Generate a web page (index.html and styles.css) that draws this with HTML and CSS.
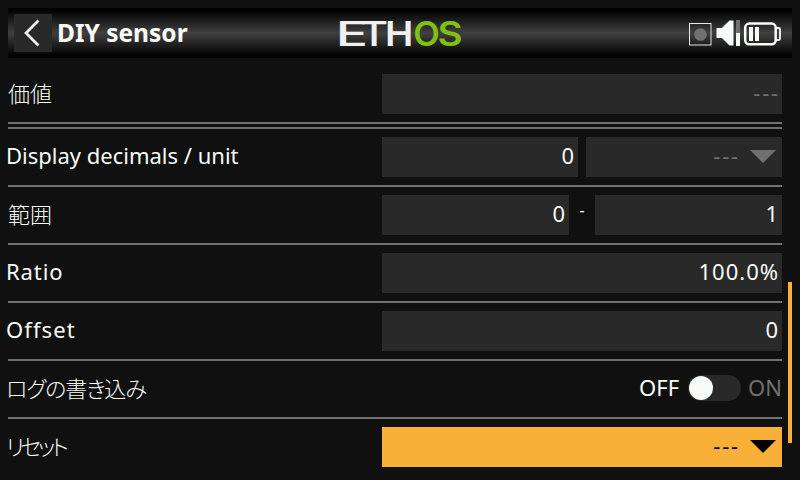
FILE: index.html
```html
<!DOCTYPE html>
<html lang="ja">
<head>
<meta charset="utf-8">
<title>DIY sensor</title>
<link rel="stylesheet" href="styles.css">
</head>
<body>
<header class="topbar">
  <button class="back" aria-label="Back"><svg width="38" height="38" viewBox="0 0 38 38"><path d="M24.5 6.5 L12 19 L24.5 31.5" fill="none" stroke="#f8fcf8" stroke-width="2.7"/></svg></button>
  <h1 class="title">DIY sensor</h1>
  <svg class="logo" width="140" height="50" viewBox="0 0 140 50">
    <g class="logo-light">
      <text transform="translate(4.8 37.8) scale(1.55 1)">E</text>
      <text transform="translate(29 37.8) scale(1.25 1)">T</text>
      <text class="heavy" transform="translate(53.9 37.8) scale(1.1 1)">H</text>
    </g>
    <g class="logo-green heavy">
      <text transform="translate(82.3 37.7) scale(1 1)">O</text>
      <text transform="translate(106.6 37.7) scale(1.12 1)">S</text>
    </g>
  </svg>
  <svg class="status" width="94" height="50" viewBox="0 0 94 50">
    <rect x="1.5" y="15.5" width="21.5" height="21.5" fill="none" stroke="#e4e8e4" stroke-width="1"/>
    <circle cx="12.5" cy="26.5" r="6.3" fill="#707070"/>
    <path d="M28.5 20 H34 L41.5 12.5 H45.5 V37.5 H41.5 L34 30 H28.5 Z" fill="#f8fcf8"/>
    <path d="M34 19.8 L39.5 14.3" stroke="#aaa" stroke-width="1"/>
    <rect x="48" y="12" width="4" height="13" fill="#707070"/>
    <rect x="48" y="25" width="4" height="13" fill="#f8fcf8"/>
    <rect x="57.2" y="15.6" width="30.5" height="20.6" rx="4" fill="none" stroke="#f8fcf8" stroke-width="2.5"/>
    <path d="M88 20 H90.5 Q92 20 92 21.5 V30.5 Q92 32 90.5 32 H88" fill="none" stroke="#f8fcf8" stroke-width="1.8"/>
    <rect x="61" y="19" width="4" height="14" fill="#f8fcf8"/>
    <rect x="67" y="19" width="4" height="14" fill="#f8fcf8"/>
  </svg>
</header>
<main class="form">
  <div class="row first"><span class="label cjk">価値</span><div class="controls"><div class="field muted dashes">---</div></div></div>
  <div class="row"><span class="label">Display decimals / unit</span><div class="controls split"><div class="field">0</div><div class="field select muted"><span class="dashes">---</span><svg class="arrow" width="26" height="13" viewBox="0 0 26 13"><path d="M0 0H26L13 13Z"/></svg></div></div></div>
  <div class="row"><span class="label cjk">範囲</span><div class="controls range"><div class="field">0</div><span class="dash">-</span><div class="field">1</div></div></div>
  <div class="row"><span class="label ratio">Ratio</span><div class="controls"><div class="field percent">100.0%</div></div></div>
  <div class="row"><span class="label offset">Offset</span><div class="controls"><div class="field">0</div></div></div>
  <div class="row"><span class="label cjk log">ログの書き込み</span><div class="controls toggle"><span>OFF</span><span class="switch"><span class="knob"></span></span><span class="muted">ON</span></div></div>
  <div class="row"><span class="label cjk reset">リセット</span><div class="controls"><div class="field select focused"><span class="dashes">---</span><svg class="arrow" width="26" height="13" viewBox="0 0 26 13"><path d="M0 0H26L13 13Z"/></svg></div></div></div>
</main>
<div class="scrollbar"></div>
</body>
</html>
```
FILE: styles.css
```css
* { box-sizing: border-box; }
body {
  margin: 0;
  width: 800px;
  height: 480px;
  padding: 8px;
  overflow: hidden;
  background: #101010;
  color: #f8fcf8;
  font: 22px/36px "Noto Sans", "Noto Sans CJK JP", sans-serif;
}
.topbar {
  position: relative;
  display: flex;
  align-items: center;
  height: 50px;
  padding: 0 10px 0 6px;
  background: linear-gradient(#000 0, #000 4%, #404040 50%, #000 96%, #000 100%);
}
.back { display: block; width: 38px; height: 38px; padding: 0; border: 0; background: #292929; }
.back svg { display: block; }
.title { margin: 0 0 0 5px; font-size: 24.5px; line-height: 50px; font-weight: 700; white-space: nowrap; }
.logo { position: absolute; left: 323px; top: 0; font-family: Inter, sans-serif; font-size: 34.5px; font-weight: 500; }
.logo .heavy { font-weight: 600; }
.logo-light { fill: #f0f0f0; }
.logo-green { fill: #80c010; }
.status { margin-left: auto; }
.form { width: 774px; padding-top: 16px; }
.row {
  display: flex;
  height: 58px;
  padding-top: 8px;
  border-top: 2px solid #707070;
}
.row.first {
  height: 50px;
  margin-bottom: 3px;
  padding-top: 0;
  border-top: 0;
  border-bottom: 2px solid #707070;
}
.label { width: 374px; margin-left: -2px; flex: none; white-space: nowrap; }
.cjk { margin-left: 0; font-family: "Noto Sans CJK JP", sans-serif; font-weight: 300; }
.ratio { letter-spacing: 0.9px; }
.offset { letter-spacing: 1.1px; }
.log { margin-left: -2px; font-feature-settings: "palt"; letter-spacing: -1.1px; }
.reset { margin-left: -2px; font-feature-settings: "palt"; letter-spacing: -3.5px; }
.controls { display: flex; width: 400px; height: 40px; margin-left: auto; }
.field { flex: 1; height: 40px; padding-right: 4px; background: #292929; text-align: right; }
.percent { letter-spacing: 1px; padding-right: 3px; }
.split { gap: 8px; }
.split .field { flex: 0 0 196px; }
.dash { width: 26px; text-align: center; font-size: 16px; line-height: 30px; }
.dashes { letter-spacing: 1.8px; }
.field.dashes { padding-right: 2px; }
.muted { color: #707070; }
.select { display: flex; justify-content: flex-end; align-items: flex-start; gap: 10px; padding-right: 6px; }
.arrow { margin-top: 13px; }
.arrow path { fill: currentColor; }
.focused { background: #f8b038; color: #000; }
.toggle { justify-content: flex-end; align-items: flex-start; }
.switch { width: 53px; height: 26px; margin: 6px 7px 0 9px; padding: 1px; border-radius: 13px; background: #292929; }
.knob { display: block; width: 24px; height: 24px; border-radius: 50%; background: #f8fcf8; }
.scrollbar { position: absolute; left: 788px; top: 282px; width: 4px; height: 161px; background: #f8b038; }
```
